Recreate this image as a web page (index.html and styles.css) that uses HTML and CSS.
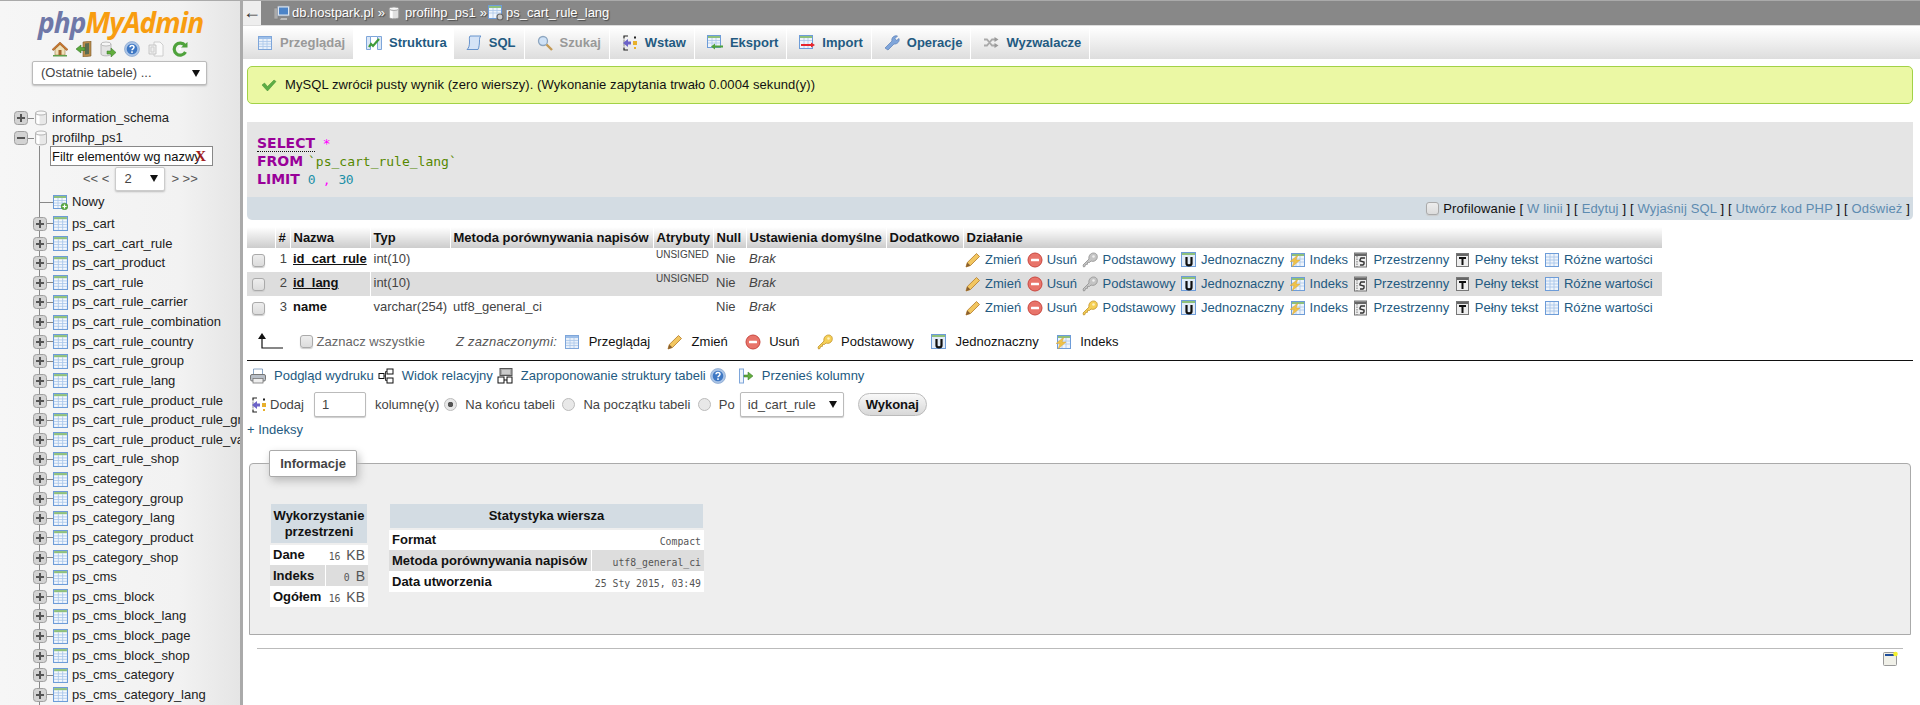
FILE: index.html
```html
<!DOCTYPE html>
<html lang="pl">
<head>
<meta charset="utf-8">
<title>phpMyAdmin</title>
<link rel="stylesheet" href="styles.css">
</head>
<body>
<svg class="defs" aria-hidden="true">
  <symbol id="home" viewBox="0 0 16 16"><path d="M3 8v6h10V8L8 3z" fill="#efe0b8" stroke="#a98a55" stroke-width=".7"/><path d="M0 8.500 8 1l8 7.500-1.500 1L8 3.500 1.500 9.500z" fill="#c9772c" stroke="#8c5020" stroke-width=".5"/><rect x="6.500" y="9" width="3" height="5" fill="#a4672f"/><path d="M1 14h14v1.500H1z" fill="#5f9e4b"/></symbol>
  <symbol id="door" viewBox="0 0 16 16"><path d="M7 1l8-1v15l-8 1z" fill="#b98c4a" stroke="#7c5a2b" stroke-width=".6"/><path d="M9 2.500l4-.5v11l-4 .5z" fill="#5a6b50"/><path d="M0 8l5-4v2.500h4v3H5V12z" fill="#59a83c" stroke="#2f6f1f" stroke-width=".5"/></symbol>
  <symbol id="dbgo" viewBox="0 0 16 16"><path d="M1 3v10c0 2.500 10 2.500 10 0V3z" fill="#e4e4e4" stroke="#a5a5a5" stroke-width=".7"/><ellipse cx="6" cy="3" rx="5" ry="2" fill="#f6f6f6" stroke="#a5a5a5" stroke-width=".7"/><path d="M7 10h4V7l5 4.500-5 4.500v-3H7z" fill="#62ad3d" stroke="#37772a" stroke-width=".5"/></symbol>
  <symbol id="help" viewBox="0 0 16 16"><circle cx="8" cy="8" r="7.500" fill="#a9c3e6" stroke="#7c9cc8" stroke-width=".6"/><circle cx="8" cy="8" r="5.300" fill="#3f78c4"/><path d="M6 6.300c0-2.400 4-2.400 4 0 0 1.500-2 1.500-2 3" fill="none" stroke="#fff" stroke-width="1.500"/><rect x="7.200" y="10.300" width="1.600" height="1.600" fill="#fff"/></symbol>
  <symbol id="copy" viewBox="0 0 16 16"><path d="M6 1h6l3 3v11H6z" fill="#fafafa" stroke="#c4c4c4" stroke-width=".8"/><path d="M1 4h7v9H1z" fill="#eee" stroke="#bdbdbd" stroke-width=".8"/><path d="M3 6v5h3V6z" fill="none" stroke="#cfcfcf"/></symbol>
  <symbol id="reload" viewBox="0 0 16 16"><path d="M13 4.500A6 6 0 1 0 13.500 11" fill="none" stroke="#4fa23c" stroke-width="3.200"/><path d="M9 6.500h6.500V1z" fill="#4fa23c"/><circle cx="8" cy="8" r="1.300" fill="#fff"/></symbol>
  <symbol id="plus" viewBox="0 0 14 14"><rect x=".5" y=".5" width="13" height="13" rx="3" fill="#d3d3d3" stroke="#a0a0a0"/><path d="M3 7h8M7 3v8" stroke="#555" stroke-width="2"/></symbol>
  <symbol id="minus" viewBox="0 0 14 14"><rect x=".5" y=".5" width="13" height="13" rx="3" fill="#d3d3d3" stroke="#a0a0a0"/><path d="M3 7h8" stroke="#555" stroke-width="2"/></symbol>
  <symbol id="db" viewBox="0 0 14 16"><path d="M1.500 3v10c0 2.400 11 2.400 11 0V3z" fill="#e8e8e8" stroke="#b5b5b5"/><ellipse cx="7" cy="3" rx="5.500" ry="2" fill="#f8f8f8" stroke="#b5b5b5"/><path d="M2.500 5v8c1 1 2 1.200 3 1.200V6z" fill="#fff"/></symbol>
  <symbol id="table" viewBox="0 0 14 14"><rect x=".5" y=".5" width="13" height="13" fill="#f4f8fd" stroke="#6d9cd8"/><rect x="1" y="1" width="12" height="2" fill="#8ec07c"/><path d="M1 5.500h12M1 8h12M1 10.500h12M5 3v10M9 3v10" stroke="#a9c6ea" stroke-width=".8"/></symbol>
  <symbol id="tablenew" viewBox="0 0 15 15"><rect x=".5" y=".5" width="13" height="13" fill="#f4f8fd" stroke="#6d9cd8"/><rect x="1" y="1" width="12" height="2" fill="#8ec07c"/><path d="M1 5.500h12M1 8h12M1 10.500h12M5 3v10M9 3v10" stroke="#a9c6ea" stroke-width=".8"/><circle cx="11.500" cy="11.500" r="3.300" fill="#5fae44" stroke="#37802a" stroke-width=".5"/><path d="M9.500 11.500h4M11.500 9.500v4" stroke="#fff" stroke-width="1.200"/></symbol>
  <symbol id="server" viewBox="0 0 16 16"><rect x="0" y="3" width="4" height="11" fill="#aaa" stroke="#777" stroke-width=".5"/><rect x="3.500" y="1" width="12" height="10" rx="1" fill="#dfe6ef" stroke="#8a97a8" stroke-width=".7"/><rect x="5" y="2.500" width="9" height="7" fill="#4c84c8"/><path d="M7 13h6v2H6z" fill="#bbb"/></symbol>
  <symbol id="dbw" viewBox="0 0 14 16"><path d="M1.500 3v10c0 2.400 11 2.400 11 0V3z" fill="#e0e0e0" stroke="#999"/><ellipse cx="7" cy="3" rx="5.500" ry="2" fill="#f8f8f8" stroke="#999"/><path d="M2.500 5v8c1 1 2 1.200 3 1.200V6z" fill="#fff"/></symbol>
  <symbol id="tblgear" viewBox="0 0 16 16"><rect x=".5" y=".5" width="13" height="13" fill="#eef4fb" stroke="#6d9cd8"/><rect x="1" y="1" width="12" height="2" fill="#8ec07c"/><path d="M1 5.500h12M1 8h12M5 3v10M9 3v10" stroke="#a9c6ea" stroke-width=".8"/><circle cx="12" cy="12" r="3" fill="#ccc" stroke="#666" stroke-width="1.200"/></symbol>
  <symbol id="browse" viewBox="0 0 16 16"><rect x="1.500" y="1.500" width="13" height="13" fill="#e8f0fa" stroke="#7ea6da"/><rect x="2" y="2" width="12" height="2" fill="#9cbee8"/><path d="M2 6.500h12M2 9h12M2 11.500h12M6 4v10M10 4v10" stroke="#a9c6ea" stroke-width=".8"/></symbol>
  <symbol id="struct" viewBox="0 0 16 16"><path d="M.5 1.500h4v13h-4z" fill="#dbe7f6" stroke="#7ea6da"/><path d="M11.500 1.500h4v13h-4z" fill="#dbe7f6" stroke="#7ea6da"/><path d="M4.500 1.500h7" stroke="#7ea6da"/><path d="M3 12l2-3 2 2 6-7" fill="none" stroke="#3f9b3a" stroke-width="2.200"/></symbol>
  <symbol id="sql" viewBox="0 0 16 16"><path d="M4 1h11c-1.500 1-1.500 3-1.500 5s-.5 7-1.500 8.500H1C3 13 3.500 10 3.500 7S3 2 4 1z" fill="#d5e3f6" stroke="#5a8ac8" stroke-width=".9"/></symbol>
  <symbol id="search" viewBox="0 0 16 16"><circle cx="6" cy="6" r="4.500" fill="#cfe2f7" stroke="#8da6c0" stroke-width="1.300"/><path d="M9.500 9.500l5.500 5.500" stroke="#c49a55" stroke-width="2.400"/></symbol>
  <symbol id="insert" viewBox="0 0 16 16"><path d="M6 1H2v2.500M2 12.500V15h4" fill="none" stroke="#222" stroke-width="1.200"/><path d="M2 4.500v7" stroke="#888"/><path d="M1 8l5-4v2.500h3v3H6V12z" fill="#6c63c8"/><rect x="11" y="6" width="4" height="4" fill="#e8b02c"/><rect x="12" y="1.500" width="2" height="2" fill="#222"/><rect x="12" y="12" width="2" height="2" fill="#e8b02c"/></symbol>
  <symbol id="export" viewBox="0 0 16 16"><rect x=".5" y=".5" width="13" height="12" fill="#eef4fb" stroke="#6d9cd8"/><rect x="1" y="1" width="12" height="2" fill="#8ec07c"/><path d="M1 5.500h12M1 8h12M5 3v9M9 3v9" stroke="#a9c6ea" stroke-width=".8"/><path d="M4 11.500l4-3v2h8v2H8v2z" fill="#4fa23c"/></symbol>
  <symbol id="import" viewBox="0 0 16 16"><rect x=".5" y=".5" width="13" height="13" fill="#eef4fb" stroke="#6d9cd8"/><rect x="1" y="1" width="12" height="2" fill="#8ec07c"/><path d="M1 5.500h12M5 3v10M9 3v10" stroke="#a9c6ea" stroke-width=".8"/><path d="M2 9h10V7.500l4 2.500-4 2.500V11H2z" fill="#e8262c"/></symbol>
  <symbol id="ops" viewBox="0 0 16 16"><path d="M1 13l7-7c-1-3 2-6 5.500-5L11 3.500l1.500 2L15 3.500c1 3-2 6-5 5.500l-6 6z" fill="#7fa5da" stroke="#5a80b8" stroke-width=".7"/></symbol>
  <symbol id="triggers" viewBox="0 0 16 16"><path d="M1 4.500h3l5 6h3M1 10.500h3l5-6h3" fill="none" stroke="#aaa" stroke-width="1.800"/><path d="M11.500 2l4 2.500-4 2.500zM11.500 8l4 2.500-4 2.500z" fill="#999"/></symbol>
  <symbol id="check" viewBox="0 0 16 16"><path d="M1 8l2.500-2 3 3.500L13 3l2 1.500-8.500 9.500z" fill="#5cae44" stroke="#3f8a30" stroke-width=".5"/></symbol>
  <symbol id="pencil" viewBox="0 0 16 16"><path d="M1 15l1.300-4.500L11.500 1.500 14.500 4.500 5.500 13.500z" fill="#f2c660" stroke="#b37a28" stroke-width=".8"/><path d="M1 15l1.300-4.500 3.200 3z" fill="#8a6030"/></symbol>
  <symbol id="del" viewBox="0 0 16 16"><circle cx="8" cy="8" r="7" fill="#e8746a" stroke="#c9473f"/><rect x="4" y="6.800" width="8" height="2.400" rx=".5" fill="#fff"/></symbol>
  <symbol id="keygray" viewBox="0 0 16 16"><path d="M1 13l6-6c-.8-3 1.500-6 4.500-6S16 3.500 15 6.500c-1 2.500-4 3.500-6 2.500l-1.500 1.500-2-.2v2l-2 .2-.5 2-1.500.5z" fill="#c4c4c4" stroke="#8f8f8f" stroke-width=".8"/><circle cx="11.500" cy="4.500" r="1.300" fill="#eee"/></symbol>
  <symbol id="key" viewBox="0 0 16 16"><path d="M1 13l6-6c-.8-3 1.500-6 4.500-6S16 3.500 15 6.500c-1 2.500-4 3.500-6 2.500l-1.500 1.500-2-.2v2l-2 .2-.5 2-1.500.5z" fill="#f5cf56" stroke="#c2932a" stroke-width=".8"/><circle cx="11.500" cy="4.500" r="1.300" fill="#fff3c0"/></symbol>
  <symbol id="unique" viewBox="0 0 16 16"><rect x=".5" y=".5" width="14" height="14" fill="#e2ecf8" stroke="#6d9cd8"/><rect x="1" y="1" width="13" height="2" fill="#8ec07c"/><path d="M5.500 5v6.500c0 2.500 5 2.500 5 0V5" fill="none" stroke="#111" stroke-width="2.200"/></symbol>
  <symbol id="index" viewBox="0 0 16 16"><rect x="1.500" y="1.500" width="13" height="13" fill="#eef4fb" stroke="#6d9cd8"/><rect x="2" y="2" width="12" height="2" fill="#8ec07c"/><path d="M6 4v10M10 4v10M2 7h12M2 10h12" stroke="#a9c6ea" stroke-width=".8"/><path d="M8 3L0 9.500h4L2 15l8-7H6z" fill="#efc24a" stroke="#d39f2c" stroke-width=".4"/></symbol>
  <symbol id="spatial" viewBox="0 0 16 16"><rect x="1.500" y="1" width="12" height="14" fill="#eee" stroke="#777"/><rect x="2" y="1.500" width="11" height="2.500" fill="#666"/><path d="M4 4v11" stroke="#777" stroke-dasharray="1.500 1"/><path d="M12 6H8L7 8v1l4 1v2l-1 1H7" fill="none" stroke="#333" stroke-width="1.400"/></symbol>
  <symbol id="fulltext" viewBox="0 0 16 16"><rect x="1.500" y="1.500" width="12" height="13" fill="#eee" stroke="#777"/><rect x="2" y="2" width="11" height="2" fill="#666"/><path d="M4 6h7M7.500 6v7" stroke="#111" stroke-width="2"/></symbol>
  <symbol id="distinct" viewBox="0 0 16 16"><rect x="1.500" y="1.500" width="13" height="13" fill="#eef4fb" stroke="#6d9cd8"/><path d="M2 5h12M2 8h12M2 11h12M6 2v12M10 2v12" stroke="#a9c6ea" stroke-width=".9"/></symbol>
  <symbol id="print" viewBox="0 0 16 16"><path d="M3.500 1h9v6h-9z" fill="#fff" stroke="#6f8fb5" stroke-width=".8"/><rect x=".5" y="6.500" width="15" height="6.500" rx="1.500" fill="#b9bfc7" stroke="#777"/><rect x="3" y="10.500" width="10" height="4.500" fill="#eee" stroke="#777" stroke-width=".8"/></symbol>
  <symbol id="relation" viewBox="0 0 16 16"><rect x="9" y="1" width="6" height="5" fill="#fff" stroke="#111"/><rect x="9" y="10" width="6" height="5" fill="#fff" stroke="#111"/><rect x="1" y="5.500" width="5" height="5" fill="#fff" stroke="#111"/><path d="M6 8h1.500V3.500H9M7.500 8v4.500H9" fill="none" stroke="#333"/></symbol>
  <symbol id="propose" viewBox="0 0 16 16"><rect x="3" y=".5" width="12" height="7" fill="#aaa" stroke="#555"/><path d="M5 3h8M5 5h8" stroke="#eee"/><rect x="1" y="9" width="6" height="6" fill="#fff" stroke="#111"/><rect x="10" y="9" width="5" height="6" fill="#fff" stroke="#111"/><path d="M7 12h3" stroke="#111"/></symbol>
  <symbol id="move" viewBox="0 0 16 16"><rect x="1.500" y="1" width="4" height="14" fill="#eef4fb" stroke="#7ea6da"/><path d="M6 7h4V4l5 4-5 4V9H6z" fill="#62ad3d" stroke="#37772a" stroke-width=".5"/></symbol>
  <symbol id="arrow" viewBox="0 0 26 18"><path d="M5 2v13h21" fill="none" stroke="#111" stroke-width="1.200"/><path d="M5 0l4 6H1z" fill="#111"/></symbol>
  <symbol id="console" viewBox="0 0 16 16"><rect x=".5" y="1.500" width="13" height="13" rx="1" fill="#f0f0e8" stroke="#999"/><rect x="2" y="3" width="9" height="2" fill="#1f4e9c"/><circle cx="12.500" cy="3" r="2.300" fill="#f5f22c"/></symbol>
</svg>

<aside class="nav">
  <div class="logo"><span class="php">php</span><span class="my">MyAdmin</span></div>
  <div class="navicons">
    <svg class="i"><use href="#home"/></svg>
    <svg class="i"><use href="#door"/></svg>
    <svg class="i"><use href="#dbgo"/></svg>
    <svg class="i"><use href="#help"/></svg>
    <svg class="i"><use href="#copy"/></svg>
    <svg class="i"><use href="#reload"/></svg>
  </div>
  <div class="recent"><span>(Ostatnie tabele) ...</span><i class="tri"></i></div>
  <div class="dbrow"><svg class="box"><use href="#plus"/></svg><b class="tick"></b><svg class="dbi"><use href="#db"/></svg><a>information_schema</a></div>
  <div class="dbrow"><svg class="box"><use href="#minus"/></svg><b class="tick"></b><svg class="dbi"><use href="#db"/></svg><a>profilhp_ps1</a></div>
  <div class="tree">
    <div class="filter"><input class="filterin" value="Filtr elementów wg nazwy"><span class="clear">X</span></div>
    <div class="pager"><span>&lt;&lt; &lt;</span><div class="pagesel"><span>2</span><i class="tri"></i></div><span>&gt; &gt;&gt;</span></div>
    <div class="row new"><b class="longtick"></b><svg class="ti"><use href="#tablenew"/></svg><a>Nowy</a></div>
    <div class="row"><svg class="box"><use href="#plus"/></svg><b class="tick"></b><svg class="ti"><use href="#table"/></svg><a>ps_cart</a></div>
    <div class="row"><svg class="box"><use href="#plus"/></svg><b class="tick"></b><svg class="ti"><use href="#table"/></svg><a>ps_cart_cart_rule</a></div>
    <div class="row"><svg class="box"><use href="#plus"/></svg><b class="tick"></b><svg class="ti"><use href="#table"/></svg><a>ps_cart_product</a></div>
    <div class="row"><svg class="box"><use href="#plus"/></svg><b class="tick"></b><svg class="ti"><use href="#table"/></svg><a>ps_cart_rule</a></div>
    <div class="row"><svg class="box"><use href="#plus"/></svg><b class="tick"></b><svg class="ti"><use href="#table"/></svg><a>ps_cart_rule_carrier</a></div>
    <div class="row"><svg class="box"><use href="#plus"/></svg><b class="tick"></b><svg class="ti"><use href="#table"/></svg><a>ps_cart_rule_combination</a></div>
    <div class="row"><svg class="box"><use href="#plus"/></svg><b class="tick"></b><svg class="ti"><use href="#table"/></svg><a>ps_cart_rule_country</a></div>
    <div class="row"><svg class="box"><use href="#plus"/></svg><b class="tick"></b><svg class="ti"><use href="#table"/></svg><a>ps_cart_rule_group</a></div>
    <div class="row"><svg class="box"><use href="#plus"/></svg><b class="tick"></b><svg class="ti"><use href="#table"/></svg><a>ps_cart_rule_lang</a></div>
    <div class="row"><svg class="box"><use href="#plus"/></svg><b class="tick"></b><svg class="ti"><use href="#table"/></svg><a>ps_cart_rule_product_rule</a></div>
    <div class="row"><svg class="box"><use href="#plus"/></svg><b class="tick"></b><svg class="ti"><use href="#table"/></svg><a>ps_cart_rule_product_rule_group</a></div>
    <div class="row"><svg class="box"><use href="#plus"/></svg><b class="tick"></b><svg class="ti"><use href="#table"/></svg><a>ps_cart_rule_product_rule_value</a></div>
    <div class="row"><svg class="box"><use href="#plus"/></svg><b class="tick"></b><svg class="ti"><use href="#table"/></svg><a>ps_cart_rule_shop</a></div>
    <div class="row"><svg class="box"><use href="#plus"/></svg><b class="tick"></b><svg class="ti"><use href="#table"/></svg><a>ps_category</a></div>
    <div class="row"><svg class="box"><use href="#plus"/></svg><b class="tick"></b><svg class="ti"><use href="#table"/></svg><a>ps_category_group</a></div>
    <div class="row"><svg class="box"><use href="#plus"/></svg><b class="tick"></b><svg class="ti"><use href="#table"/></svg><a>ps_category_lang</a></div>
    <div class="row"><svg class="box"><use href="#plus"/></svg><b class="tick"></b><svg class="ti"><use href="#table"/></svg><a>ps_category_product</a></div>
    <div class="row"><svg class="box"><use href="#plus"/></svg><b class="tick"></b><svg class="ti"><use href="#table"/></svg><a>ps_category_shop</a></div>
    <div class="row"><svg class="box"><use href="#plus"/></svg><b class="tick"></b><svg class="ti"><use href="#table"/></svg><a>ps_cms</a></div>
    <div class="row"><svg class="box"><use href="#plus"/></svg><b class="tick"></b><svg class="ti"><use href="#table"/></svg><a>ps_cms_block</a></div>
    <div class="row"><svg class="box"><use href="#plus"/></svg><b class="tick"></b><svg class="ti"><use href="#table"/></svg><a>ps_cms_block_lang</a></div>
    <div class="row"><svg class="box"><use href="#plus"/></svg><b class="tick"></b><svg class="ti"><use href="#table"/></svg><a>ps_cms_block_page</a></div>
    <div class="row"><svg class="box"><use href="#plus"/></svg><b class="tick"></b><svg class="ti"><use href="#table"/></svg><a>ps_cms_block_shop</a></div>
    <div class="row"><svg class="box"><use href="#plus"/></svg><b class="tick"></b><svg class="ti"><use href="#table"/></svg><a>ps_cms_category</a></div>
    <div class="row"><svg class="box"><use href="#plus"/></svg><b class="tick"></b><svg class="ti"><use href="#table"/></svg><a>ps_cms_category_lang</a></div>
  </div>
</aside>

<main class="main">
  <header class="crumbs">
    <span class="back">←</span>
    <div class="trail">
      <svg class="i"><use href="#server"/></svg><a>db.hostpark.pl</a><span class="sep">»</span>
      <svg class="dbc"><use href="#dbw"/></svg><a>profilhp_ps1</a><span class="sep">»</span>
      <svg class="i tbl"><use href="#tblgear"/></svg><a>ps_cart_rule_lang</a>
    </div>
  </header>
  <nav class="tabs">
    <a class="tab off first"><svg class="i"><use href="#browse"/></svg>Przeglądaj</a>
    <a class="tab on"><svg class="i"><use href="#struct"/></svg>Struktura</a>
    <a class="tab"><svg class="i"><use href="#sql"/></svg>SQL</a>
    <a class="tab off"><svg class="i"><use href="#search"/></svg>Szukaj</a>
    <a class="tab"><svg class="i"><use href="#insert"/></svg>Wstaw</a>
    <a class="tab"><svg class="i"><use href="#export"/></svg>Eksport</a>
    <a class="tab"><svg class="i"><use href="#import"/></svg>Import</a>
    <a class="tab"><svg class="i"><use href="#ops"/></svg>Operacje</a>
    <a class="tab"><svg class="i"><use href="#triggers"/></svg>Wyzwalacze</a>
  </nav>

  <div class="msg"><svg class="i"><use href="#check"/></svg>MySQL zwrócił pusty wynik (zero wierszy). (Wykonanie zapytania trwało 0.0004 sekund(y))</div>

  <section class="sqlbox">
    <div class="sqlcode">
      <div class="ln"><span class="kw sel">SELECT</span> <span class="op">*</span></div>
      <div class="ln"><span class="kw">FROM</span> <span class="str">`ps_cart_rule_lang`</span></div>
      <div class="ln"><span class="kw">LIMIT</span> <span class="num">0</span> <span class="op">,</span> <span class="num">30</span></div>
    </div>
    <div class="sqltools"><input type="checkbox" class="cb"><span>Profilowanie [ <a>W linii</a> ] [ <a>Edytuj</a> ] [ <a>Wyjaśnij SQL</a> ] [ <a>Utwórz kod PHP</a> ] [ <a>Odśwież</a> ]</span></div>
  </section>

  <table class="struct">
    <colgroup><col class="c1"><col class="c2"><col class="c3"><col class="c4"><col class="c5"><col class="c6"><col class="c7"><col class="c8"><col class="c9"><col class="c10"></colgroup>
    <thead><tr><th></th><th>#</th><th>Nazwa</th><th>Typ</th><th>Metoda porównywania napisów</th><th>Atrybuty</th><th>Null</th><th>Ustawienia domyślne</th><th>Dodatkowo</th><th>Działanie</th></tr></thead>
    <tbody>
      <tr>
        <td class="cc"><input type="checkbox" class="cb"></td><td class="n">1</td><td class="name pk">id_cart_rule</td><td>int(10)</td><td></td><td class="attr">UNSIGNED</td><td>Nie</td><td class="def">Brak</td><td></td>
        <td><div class="acts"><a><svg class="i"><use href="#pencil"/></svg>Zmień</a><a><svg class="i"><use href="#del"/></svg>Usuń</a><a><svg class="i"><use href="#keygray"/></svg>Podstawowy</a><a><svg class="i"><use href="#unique"/></svg>Jednoznaczny</a><a><svg class="i"><use href="#index"/></svg>Indeks</a><a><svg class="i"><use href="#spatial"/></svg>Przestrzenny</a><a><svg class="i"><use href="#fulltext"/></svg>Pełny tekst</a><a><svg class="i"><use href="#distinct"/></svg>Różne wartości</a></div></td>
      </tr>
      <tr class="alt">
        <td class="cc"><input type="checkbox" class="cb"></td><td class="n">2</td><td class="name pk">id_lang</td><td>int(10)</td><td></td><td class="attr">UNSIGNED</td><td>Nie</td><td class="def">Brak</td><td></td>
        <td><div class="acts"><a><svg class="i"><use href="#pencil"/></svg>Zmień</a><a><svg class="i"><use href="#del"/></svg>Usuń</a><a><svg class="i"><use href="#keygray"/></svg>Podstawowy</a><a><svg class="i"><use href="#unique"/></svg>Jednoznaczny</a><a><svg class="i"><use href="#index"/></svg>Indeks</a><a><svg class="i"><use href="#spatial"/></svg>Przestrzenny</a><a><svg class="i"><use href="#fulltext"/></svg>Pełny tekst</a><a><svg class="i"><use href="#distinct"/></svg>Różne wartości</a></div></td>
      </tr>
      <tr>
        <td class="cc"><input type="checkbox" class="cb"></td><td class="n">3</td><td class="name">name</td><td>varchar(254)</td><td>utf8_general_ci</td><td></td><td>Nie</td><td class="def">Brak</td><td></td>
        <td><div class="acts"><a><svg class="i"><use href="#pencil"/></svg>Zmień</a><a><svg class="i"><use href="#del"/></svg>Usuń</a><a><svg class="i"><use href="#key"/></svg>Podstawowy</a><a><svg class="i"><use href="#unique"/></svg>Jednoznaczny</a><a><svg class="i"><use href="#index"/></svg>Indeks</a><a><svg class="i"><use href="#spatial"/></svg>Przestrzenny</a><a><svg class="i"><use href="#fulltext"/></svg>Pełny tekst</a><a><svg class="i"><use href="#distinct"/></svg>Różne wartości</a></div></td>
      </tr>
    </tbody>
  </table>

  <div class="bulk">
    <svg class="arrow"><use href="#arrow"/></svg>
    <label class="checkall"><input type="checkbox" class="cb">Zaznacz wszystkie</label>
    <em class="withsel">Z zaznaczonymi:</em>
    <a><svg class="i"><use href="#browse"/></svg>Przeglądaj</a>
    <a><svg class="i"><use href="#pencil"/></svg>Zmień</a>
    <a><svg class="i"><use href="#del"/></svg>Usuń</a>
    <a><svg class="i"><use href="#key"/></svg>Podstawowy</a>
    <a><svg class="i"><use href="#unique"/></svg>Jednoznaczny</a>
    <a><svg class="i"><use href="#index"/></svg>Indeks</a>
  </div>

  <div class="rule"></div>

  <div class="links">
    <svg class="i"><use href="#print"/></svg><a class="gap8">Podgląd wydruku</a>
    <svg class="i"><use href="#relation"/></svg><a class="gap8">Widok relacyjny</a>
    <svg class="i"><use href="#propose"/></svg><a class="gap8">Zaproponowanie struktury tabeli</a>
    <svg class="i"><use href="#help"/></svg>
    <svg class="i mv"><use href="#move"/></svg><a class="gap8">Przenieś kolumny</a>
  </div>

  <form class="addrow">
    <svg class="i"><use href="#insert"/></svg>
    <span class="dodaj">Dodaj</span>
    <input class="num1" value="1">
    <span class="kol">kolumnę(y)</span>
    <label class="rad"><input type="radio" name="pos" checked>Na końcu tabeli</label>
    <label class="rad"><input type="radio" name="pos">Na początku tabeli</label>
    <label class="rad"><input type="radio" name="pos">Po</label>
    <div class="colsel"><span>id_cart_rule</span><i class="tri"></i></div>
    <button type="button" class="go">Wykonaj</button>
  </form>

  <div class="indeksy"><span>+</span> <a>Indeksy</a></div>

  <section class="info">
    <div class="legend">Informacje</div>
    <div class="stats">
      <table class="mini space">
        <thead><tr><th colspan="2">Wykorzystanie przestrzeni</th></tr></thead>
        <tbody>
          <tr><th>Dane</th><td class="val"><code>16</code> KB</td></tr>
          <tr class="alt"><th>Indeks</th><td class="val"><code>0</code> B</td></tr>
          <tr><th>Ogółem</th><td class="val"><code>16</code> KB</td></tr>
        </tbody>
      </table>
      <table class="mini rowstat">
        <thead><tr><th colspan="2">Statystyka wiersza</th></tr></thead>
        <tbody>
          <tr><th>Format</th><td class="val"><code>Compact</code></td></tr>
          <tr class="alt"><th>Metoda porównywania napisów</th><td class="val"><code>utf8_general_ci</code></td></tr>
          <tr><th>Data utworzenia</th><td class="val"><code>25 Sty 2015, 03:49</code></td></tr>
        </tbody>
      </table>
    </div>
  </section>

  <div class="endrule"></div>
  <div class="foot"><svg class="i"><use href="#console"/></svg></div>
</main>
</body>
</html>
```

FILE: styles.css
```css
* { box-sizing: border-box; }
html, body { margin: 0; height: 100%; overflow: hidden; }
body { display: flex; font: 13px/16px "Liberation Sans", Arial, sans-serif; color: #444; background: #fff; }
.defs { width: 0; height: 0; position: absolute; }
.i { width: 16px; height: 16px; flex: none; display: block; }
a { color: #235a81; }
.tri { display: block; width: 0; height: 0; border: 4.500px solid transparent; border-top: 7px solid #111; border-bottom: 0; }

/* navigation */
.nav { width: 240px; height: 705px; flex: none; overflow: hidden; border-top: 1px solid #aaa; background: linear-gradient(to right, #f6f6f6, #f2f2f2 75%, #e5e5e5); white-space: nowrap; color: #222; }
.nav a { color: #222; }
.logo { height: 39px; padding: 4px 0 0 38px; font: italic bold 28px/34px "Open Sans", sans-serif; letter-spacing: -.9px; }
.php { color: #6f78a8; }
.my { color: #f89d10; }
.navicons { display: flex; gap: 8px; height: 21px; padding: 1px 0 0 52px; }
.recent { margin: 0 0 0 32px; width: 175px; height: 24px; display: flex; align-items: center; justify-content: space-between; padding: 0 6px 0 8px; background: #fff; border: 1px solid #bbb; border-radius: 2px; box-shadow: 0 1px 2px #bbb; color: #444; }
.dbrow { display: flex; align-items: center; height: 20px; padding-left: 14px; }
.recent + .dbrow { margin-top: 23px; }
.box { width: 14px; height: 14px; flex: none; }
.tick { width: 6px; height: 1px; background: #888; flex: none; }
.dbi { width: 14px; height: 16px; flex: none; margin-right: 4px; }
.ti { width: 15px; height: 15px; flex: none; margin-right: 4px; }
.tree { margin-top: -2px; background: linear-gradient(#888, #888) no-repeat 39px 0 / 1px 100%; }
.filter { position: relative; margin-left: 50px; width: 163px; height: 20px; }
.filterin { width: 100%; height: 20px; padding: 0 0 0 1px; border: 1px solid #888; font: 13px "Liberation Sans", sans-serif; color: #111; background: #fff; }
.clear { position: absolute; right: 7px; top: 1px; font: bold 15px/18px "Liberation Serif", serif; color: #a02020; }
.pager { display: flex; align-items: center; height: 25px; padding-left: 83px; gap: 6px; color: #555; }
.pagesel { width: 50px; height: 24px; display: flex; justify-content: space-between; align-items: center; padding: 0 6px 0 8px; background: #fff; border: 1px solid #ccc; border-radius: 2px; box-shadow: 0 1px 2px #bbb; color: #444; }
.row { display: flex; align-items: center; height: 19.630px; padding-left: 33px; }
.row.new { margin: 1.500px 0 2px; }
.longtick { width: 14px; margin-left: 6px; height: 1px; background: #888; flex: none; }

/* main */
.main { flex: 1; min-width: 0; height: 705px; overflow: hidden; border-left: 3px solid #aaa; }
.crumbs { display: flex; height: 26px; background: #888; border-top: 1px solid #aaa; border-bottom: 1px solid #ddd; }
.back { width: 18px; background: #eee; color: #333; text-align: center; line-height: 22px; font-size: 18px; }
.trail { display: flex; align-items: center; padding-left: 13px; color: #fff; }
.trail a { color: #fff; text-shadow: 1px 1px 1px #444; margin-left: 2px; }
.sep { margin: 0 3px 0 4px; text-shadow: 1px 1px 1px #444; }
.dbc { width: 12px; height: 16px; flex: none; margin-right: 3px; }
.tbl { margin-left: -2px; }
.tabs { display: flex; height: 32px; margin-top: 1px; background: linear-gradient(#fff, #ddd); font-weight: bold; }
.tab { display: flex; align-items: center; gap: 7px; padding: 0 8px 0 12px; border-right: 1px solid #fff; background: linear-gradient(#fff, #ddd); }
.tab.first { padding-left: 14px; }
.tab.on { background: #fff; padding-right: 6px; }
.tab.off { color: #999; }
.msg { display: flex; align-items: center; gap: 8px; height: 38px; margin: 7px 7px 0 4px; padding-left: 13px; background: #ebf8a4; border: 1px solid #a2d246; border-radius: 5px; color: #111; letter-spacing: .08px; }
.sqlbox { margin: 18px 7px 0 4px; }
.sqlcode { height: 75px; padding: 12px 0 0 10px; background: #e5e5e5; font: 13px/18px "DejaVu Sans Mono", monospace; color: #444; }
.ln { height: 18px; }
.kw { color: #990099; font: bold 14px/18px "DejaVu Sans", sans-serif; }
.sel { border-bottom: 1px dotted #111; }
.op { color: #ff00ff; }
.str { color: #558800; margin-left: -3px; }
.num { color: #2090a8; letter-spacing: -.5px; }
.sqltools { display: flex; justify-content: flex-end; align-items: center; gap: 4px; height: 23px; padding-right: 3px; background: #d3dce3; border-radius: 0 0 5px 5px; color: #111; letter-spacing: .15px; }
.sqltools a { color: #5d8bb0; }
.cb { appearance: none; width: 13px; height: 13px; margin: 0; flex: none; border: 1px solid #aaa; border-radius: 3px; background: linear-gradient(#ededed, #dcdcdc); box-shadow: 0 1px 1px #ccc; display: block; }

/* structure table */
.struct { table-layout: fixed; width: 1415px; margin: 7px 0 0 4px; border-collapse: collapse; }
.c1 { width: 28px; } .c2 { width: 15px; } .c3 { width: 80px; } .c4 { width: 80px; } .c5 { width: 203px; }
.c6 { width: 60px; } .c7 { width: 33px; } .c8 { width: 140px; } .c9 { width: 77px; } .c10 { width: 699px; }
.struct th { height: 21px; padding: 0 3px; text-align: left; color: #111; background: linear-gradient(#fff, #ccc); border-right: 1px solid #fff; white-space: nowrap; }
.struct td { height: 24px; padding: 0 3px 2px; white-space: nowrap; overflow: visible; }
.struct .alt td { background: #ddd; }
.struct .name { font-weight: bold; color: #111; border-right: 1px solid #fff; }
.struct .pk { text-decoration: underline; }
.struct .n { text-align: right; padding: 0 3px 2px 0; }
.struct .cc { padding: 0; }
.cc .cb { margin-left: 5px; }
.struct .attr { font-size: 10px; vertical-align: top; line-height: 13px; padding: 0 3px; }
.def { font-style: italic; }
.acts { display: flex; gap: 5.500px; margin-left: -1px; margin-top: 2px; }
.acts a { display: flex; align-items: center; gap: 4px; }

/* below table */
.bulk { display: flex; align-items: center; height: 40px; padding-top: 3px; margin-left: 14px; color: #111; }
.bulk .arrow { width: 26px; height: 18px; flex: none; }
.bulk a { display: flex; align-items: center; gap: 8.500px; color: #111; margin-left: 17px; }
.checkall { display: flex; align-items: center; gap: 4px; margin-left: 16.500px; color: #666; }
.withsel { margin-left: 31px; color: #555; margin-right: -10px; letter-spacing: .25px; }
.rule { height: 1px; background: #111; margin: 0 7px 0 4px; }
.links { display: flex; align-items: center; height: 30px; margin-left: 7px; }
.gap8 { margin: 0 4px 0 8px; }
.mv { margin-left: 12px; }
.addrow { display: flex; align-items: center; height: 27px; margin-left: 8px; }
.dodaj { margin-left: 3px; }
.num1 { width: 52px; height: 25px; margin-left: 10px; padding: 0 7px; border: 1px solid #bbb; border-radius: 2px; font: 13px "Liberation Sans", sans-serif; color: #444; box-shadow: 0 1px 1px #ccc; }
.kol { margin-left: 9px; }
.rad { display: flex; align-items: center; gap: 8px; margin-left: 5px; }
.rad + .rad { margin-left: 7.500px; }
.rad input { appearance: none; width: 13px; height: 13px; margin: 0; border: 1px solid #bbb; border-radius: 50%; background: #e8e8e8; }
.rad input:checked { background: radial-gradient(#555 0 2.500px, #e8e8e8 3px); }
.colsel { width: 104px; height: 25px; margin-left: 5px; display: flex; align-items: center; justify-content: space-between; padding: 0 6px 0 7px; background: #fff; border: 1px solid #bbb; border-radius: 2px; box-shadow: 0 1px 1px #ccc; }
.go { margin-left: 14px; width: 69px; height: 23px; padding: 0; border: 1px solid #bbb; border-radius: 12px; background: linear-gradient(#f8f8f8, #d8d8d8); font: bold 13px "Liberation Sans", sans-serif; color: #111; }
.indeksy { margin: 4px 0 0 4px; color: #235a81; }
.info { margin: 25px 9px 0 6px; height: 172px; background: #eee; border: 1px solid #aaa; border-radius: 4px 4px 0 0; }
.legend { width: 88px; height: 27px; margin: -14px 0 0 19px; background: #fff; border: 1px solid #aaa; border-radius: 2px; box-shadow: 2px 4px 8px #bbb; color: #444; font-weight: bold; line-height: 25px; text-align: center; }
.stats { display: flex; align-items: flex-start; gap: 19px; margin: 27px 0 0 19px; }
.mini { border-collapse: collapse; }
.mini thead th { padding: 0; background: #d3dce3; color: #111; text-align: center; font-weight: bold; border: 2px solid #eee; border-top: 0; }
.mini tbody th { height: 21px; padding: 0 3px; text-align: left; color: #111; background: #fff; font-weight: bold; white-space: nowrap; }
.mini td { height: 21px; padding: 0 3px; text-align: right; background: #fff; white-space: nowrap; }
.mini .alt th, .mini .alt td { background: #ddd; }
.mini .alt th { border-right: 1px solid #fff; }
.space { width: 100px; }
.space thead th { height: 40px; }
.rowstat { width: 317px; }
.rowstat thead th { height: 25px; }
.space tbody th { width: 57px; }
.val { font-size: 14px; color: #555; }
code { font: 9.800px "DejaVu Sans Mono", monospace; color: #555; }
.space code { margin-right: 2px; }
.endrule { height: 1px; background: #bbb; margin: 13px 17px 0 14px; }
.foot { display: flex; justify-content: flex-end; padding: 2px 21px 0 0; }
```
